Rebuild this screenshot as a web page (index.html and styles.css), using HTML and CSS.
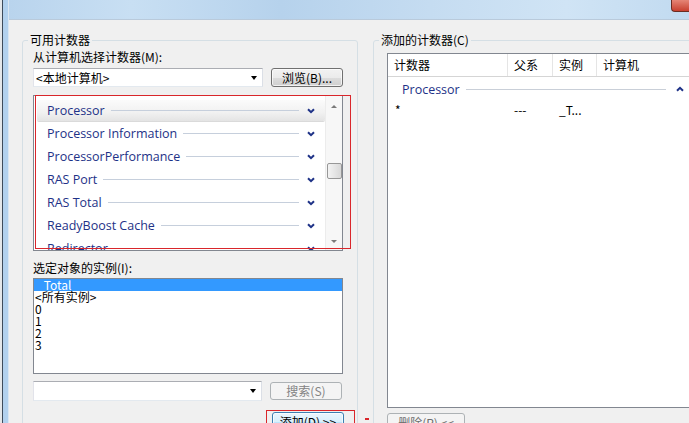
FILE: index.html
```html
<!DOCTYPE html>
<html lang="zh-CN">
<head>
    <meta charset="UTF-8">
    <meta name="viewport" content="width=device-width, initial-scale=1.0">
    <title>添加计数器</title>
    <link rel="stylesheet" href="styles.css">
</head>
<body>
    <div class="frame-left"></div>
    <div class="window">
        <div class="titlebar">
            <div class="close-btn"></div>
        </div>
        <div class="dialog">
            <fieldset class="group group-left">
                <legend>可用计数器</legend>
                <div class="group-body">
                    <div class="label">从计算机选择计数器(M):</div>
                    <div class="row">
                        <div class="combo combo-wide"><span>&lt;本地计算机&gt;</span><i class="drop"></i></div>
                        <button class="btn">浏览(B)...</button>
                    </div>
                    <div class="counter-list">
                        <div class="items">
                            <div class="item hot"><span>Processor</span><b class="rule"></b><svg class="chev" viewBox="0 0 8 6"><path d="M1 1.2 L4 4.2 L7 1.2"/></svg></div>
                            <div class="item"><span>Processor Information</span><b class="rule"></b><svg class="chev" viewBox="0 0 8 6"><path d="M1 1.2 L4 4.2 L7 1.2"/></svg></div>
                            <div class="item"><span>ProcessorPerformance</span><b class="rule"></b><svg class="chev" viewBox="0 0 8 6"><path d="M1 1.2 L4 4.2 L7 1.2"/></svg></div>
                            <div class="item"><span>RAS Port</span><b class="rule"></b><svg class="chev" viewBox="0 0 8 6"><path d="M1 1.2 L4 4.2 L7 1.2"/></svg></div>
                            <div class="item"><span>RAS Total</span><b class="rule"></b><svg class="chev" viewBox="0 0 8 6"><path d="M1 1.2 L4 4.2 L7 1.2"/></svg></div>
                            <div class="item"><span>ReadyBoost Cache</span><b class="rule"></b><svg class="chev" viewBox="0 0 8 6"><path d="M1 1.2 L4 4.2 L7 1.2"/></svg></div>
                            <div class="item"><span>Redirector</span><b class="rule"></b><svg class="chev" viewBox="0 0 8 6"><path d="M1 1.2 L4 4.2 L7 1.2"/></svg></div>
                        </div>
                        <div class="vscroll">
                            <i class="arr arr-up"></i>
                            <div class="thumb"></div>
                            <i class="arr arr-down"></i>
                        </div>
                        <div class="red-box"></div>
                    </div>
                    <div class="label label-inst">选定对象的实例(I):</div>
                    <div class="instance-list">
                        <div class="inst sel">_Total</div>
                        <div class="inst">&lt;所有实例&gt;</div>
                        <div class="inst">0</div>
                        <div class="inst">1</div>
                        <div class="inst">2</div>
                        <div class="inst">3</div>
                    </div>
                    <div class="row row-search">
                        <div class="combo combo-search"><i class="drop"></i></div>
                        <button class="btn" disabled>搜索(S)</button>
                    </div>
                    <div class="row-add">
                        <div class="red-wrap">
                            <button class="btn btn-hot">添加(D) &gt;&gt;</button>
                        </div>
                        <span class="red-tick"></span>
                    </div>
                </div>
            </fieldset>

            <fieldset class="group group-right">
                <legend>添加的计数器(C)</legend>
                <div class="group-body group-body-right">
                    <div class="listview">
                        <div class="lv-head">
                            <div class="col c1">计数器</div>
                            <div class="col c2">父系</div>
                            <div class="col c3">实例</div>
                            <div class="col c4">计算机</div>
                        </div>
                        <div class="lv-group">
                            <span>Processor</span><b class="rule"></b><svg class="chev" viewBox="0 0 8 6"><path d="M1 4.8 L4 1.8 L7 4.8"/></svg>
                        </div>
                        <div class="lv-row">
                            <div class="cell c1">*</div>
                            <div class="cell c2">---</div>
                            <div class="cell c3">_T...</div>
                            <div class="cell c4"></div>
                        </div>
                    </div>
                    <button class="btn btn-remove">删除(R) &lt;&lt;</button>
                </div>
            </fieldset>
        </div>
    </div>
</body>
</html>
```

FILE: styles.css
```css
* {
    box-sizing: border-box;
}
html, body {
    margin: 0;
}
body {
    width: 689px;
    height: 423px;
    overflow: hidden;
    display: flex;
    background: #f0f0f0;
    font-family: "Noto Sans CJK SC", "Noto Sans", sans-serif;
    font-size: 12px;
    color: #000;
}
.frame-left {
    width: 9px;
    flex: none;
    background: linear-gradient(to right, #e4e7ea 0 2px, #3d4b5b 2px 3px, #b2d1ee 3px 8px, #d9e6f2 8px);
}
.window {
    flex: 1;
    min-width: 0;
    display: flex;
    flex-direction: column;
}
.titlebar {
    height: 20px;
    flex: none;
    display: flex;
    justify-content: flex-end;
    background: linear-gradient(90deg, #b9d4ed, #c8dff3 18%, #b6d2ec 40%, #c5dcf1 62%, #d0e4f5 82%, #c1daf0);
    border-bottom: 1px solid #b9cadb;
}
.close-btn {
    width: 18px;
    height: 12px;
    background: linear-gradient(#e58576, #c8402f);
    border: 1px solid #6b2c22;
    border-top: none;
    border-right: none;
    border-radius: 0 0 0 4px;
}
.dialog {
    flex: 1;
    display: flex;
    align-items: flex-start;
    padding-top: 13px;
}

/* group boxes */
.group {
    flex: none;
    margin: 0;
    padding: 0;
    min-width: 0;
    border: 1px solid #d5dfe5;
    border-radius: 3px;
    height: 400px;
}
.group legend {
    margin-left: 5px;
    padding: 0 2px;
    line-height: 14px;
    font-size: 12px;
}
.group-left {
    margin-left: 13px;
    width: 336px;
}
.group-right {
    margin-left: 15px;
    width: 340px;
}
.group-body {
    padding: 0 13px 0 10px;
}
.group-body-right {
    padding: 0 0 0 13px;
}
.label {
    margin-top: 3px;
    line-height: 14px;
}
.label-inst {
    margin-top: 10px;
}
.row {
    display: flex;
    align-items: center;
    gap: 8px;
    margin-top: 4px;
}

/* combo boxes */
.combo {
    height: 19px;
    display: flex;
    align-items: center;
    padding-left: 2px;
    background: #fff;
    border: 1px solid #abadb3;
    border-color: #abadb3 #dbdfe6 #e3e9ef #e2e3ea;
}
.combo-wide {
    width: 230px;
}
.combo-search {
    width: 229px;
    height: 20px;
}
.drop {
    margin-left: auto;
    margin-right: 5px;
    width: 0;
    height: 0;
    border-left: 3.5px solid transparent;
    border-right: 3.5px solid transparent;
    border-top: 4px solid #000;
}

/* buttons */
.btn {
    width: 72px;
    height: 19px;
    padding: 0;
    font-family: "Noto Sans CJK SC", sans-serif;
    font-size: 12px;
    line-height: 14px;
    color: #000;
    border: 1px solid #707070;
    border-radius: 3px;
    background: linear-gradient(#f2f2f2 0, #ebebeb 50%, #dddddd 50%, #cfcfcf 100%);
    box-shadow: inset 0 0 0 1px rgba(255, 255, 255, 0.7);
}
.btn:disabled {
    color: #838383;
    border-color: #adb2b5;
    background: #f4f4f4;
    box-shadow: none;
}
.row-search .btn {
    height: 18px;
}
.btn-hot {
    border-color: #3c7fb1;
    background: linear-gradient(#eaf6fd 0, #d9f0fc 50%, #bee6fd 50%, #a7d9f5 100%);
}
.btn-remove {
    display: block;
    margin-top: 5px;
    width: 78px;
    color: #6d6d6d;
    border-color: #adb2b5;
    background: #f4f4f4;
    box-shadow: none;
}

/* counter list */
.counter-list {
    position: relative;
    margin-top: 8px;
    width: 310px;
    height: 156px;
    display: flex;
    background: #fff;
    border: 1px solid #828790;
}
.items {
    flex: 1;
    overflow: hidden;
    padding: 4px 0 0 3px;
}
.item {
    height: 21px;
    margin-bottom: 2px;
    display: flex;
    align-items: center;
    padding: 0 10px 0 10px;
    font-family: "Open Sans", "Noto Sans", sans-serif;
    font-size: 12.5px;
    color: #1e3287;
    white-space: nowrap;
}
.item.hot {
    border-radius: 2px;
    background: linear-gradient(#fbfbfb, #f1f1f1 60%, #e4e4e4);
    box-shadow: 0 1px 0 #dadada;
}
.rule {
    flex: 1;
    height: 1px;
    margin: 0 8px 0 6px;
    background: #c6cfdc;
}
.chev {
    width: 8px;
    height: 6px;
    flex: none;
    fill: none;
    stroke: #1e3287;
    stroke-width: 2;
}
.vscroll {
    width: 17px;
    flex: none;
    display: flex;
    flex-direction: column;
    align-items: center;
    background: #f7f7f7;
    border-left: 1px solid #ececec;
}
.arr {
    width: 0;
    height: 0;
    border-left: 3px solid transparent;
    border-right: 3px solid transparent;
}
.arr-up {
    margin-top: 9px;
    border-bottom: 3px solid #7a7a7a;
}
.arr-down {
    margin-top: auto;
    margin-bottom: 7px;
    border-top: 3px solid #7a7a7a;
}
.thumb {
    margin-top: 55px;
    width: 15px;
    height: 16px;
    border: 1px solid #979797;
    border-radius: 2px;
    background: linear-gradient(90deg, #f3f3f3, #e6e6e6 50%, #d8d8d8);
}
.red-box {
    position: absolute;
    left: 1px;
    top: -1px;
    width: 316px;
    height: 154px;
    border: 1px solid #d9262b;
}

/* instances */
.instance-list {
    margin-top: 3px;
    width: 310px;
    height: 96px;
    background: #fff;
    border: 1px solid #828790;
    font-size: 12px;
    line-height: 12px;
}
.inst {
    height: 12px;
    padding-left: 1px;
}
.inst.sel {
    background: #3399ff;
    color: #fff;
    padding-left: 3px;
}
.row-search {
    margin-top: 7px;
}
.row-add {
    position: relative;
    display: flex;
    justify-content: flex-end;
    margin-top: 9px;
    margin-right: -11px;
}
.red-wrap {
    padding: 1px 10px 4px 5px;
    border: 1px solid #d9262b;
}
.red-tick {
    position: absolute;
    right: -14px;
    top: 8px;
    width: 4px;
    height: 2px;
    background: #d9262b;
}

/* added counters */
.listview {
    margin-top: 6px;
    width: 305px;
    height: 355px;
    background: #fff;
    border: 1px solid #828790;
}
.lv-head, .lv-row {
    display: grid;
    grid-template-columns: 120px 45px 44px 1fr;
}
.lv-head {
    height: 23px;
    border-bottom: 1px solid #d5d5d5;
}
.col {
    padding-left: 6px;
    line-height: 22px;
    border-right: 1px solid #e5e5e5;
}
.lv-group {
    height: 22px;
    margin-top: 1px;
    display: flex;
    align-items: center;
    padding: 0 7px 0 14px;
    font-family: "Open Sans", "Noto Sans", sans-serif;
    font-size: 12.5px;
    color: #1e3287;
}
.lv-group .rule {
    margin: 0 10px 0 6px;
    background: #c9cfd8;
}
.lv-row {
    height: 20px;
    line-height: 20px;
}
.cell {
    padding-left: 6px;
}
.cell.c1 {
    padding-left: 7px;
}
```
